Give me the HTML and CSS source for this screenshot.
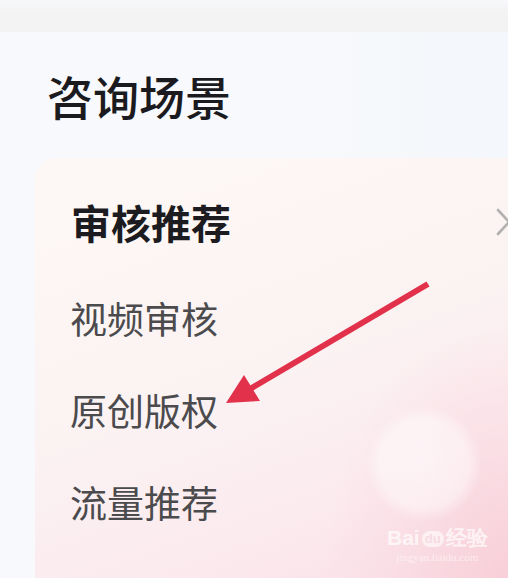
FILE: index.html
```html
<!DOCTYPE html>
<html lang="zh">
<head>
<meta charset="utf-8">
<link rel="stylesheet" href="styles.css">
</head>
<body>
<div class="page">
  <div class="topband"></div>
  <header class="header">
    <h1 class="title">咨询场景</h1>
  </header>
  <section class="card">
    <div class="row row-main">
      <span class="label-main">审核推荐</span>
      <svg class="chev" width="16" height="30" viewBox="0 0 16 30"><polyline points="3,3 14,15 3,27" fill="none" stroke="#b3b0b0" stroke-width="2.6" stroke-linecap="round" stroke-linejoin="round"/></svg>
    </div>
    <div class="row">视频审核</div>
    <div class="row">原创版权</div>
    <div class="row">流量推荐</div>
    <div class="watermark">
      <div class="wm-logo">Bai<span class="wm-du">du</span>经验</div>
      <div class="wm-url">jingyan.baidu.com</div>
    </div>
  </section>
  <svg class="arrow" width="508" height="578" viewBox="0 0 508 578">
    <line x1="428" y1="284" x2="250" y2="389" stroke="#e1314b" stroke-width="6" stroke-linecap="butt"/>
    <polygon points="226,403 244,375 260,401" fill="#e1314b"/>
  </svg>
</div>
</body>
</html>
```

FILE: styles.css
```css
html, body {
  margin: 0;
  padding: 0;
}
body {
  width: 508px;
  height: 578px;
  overflow: hidden;
  background: #f8f9fc;
  font-family: "Noto Sans CJK SC", "Noto Sans", sans-serif;
}
.page {
  position: relative;
  width: 508px;
  height: 578px;
  overflow: hidden;
  display: flex;
  flex-direction: column;
}
.topband {
  height: 32px;
  flex: none;
  background: linear-gradient(180deg, #f7f8fa 0%, #f3f3f4 35%, #f4f3f3 100%);
}
.header {
  flex: none;
  padding: 33px 0 33px 47px;
  background: linear-gradient(90deg, #f8f9fc 0%, #f7f9fc 60%, #f4f7fb 100%);
}
.title {
  margin: 0;
  font-size: 46px;
  line-height: 60px;
  font-weight: 500;
  color: #1b1b1f;
}
.card {
  position: relative;
  flex: 1;
  margin-left: 35px;
  padding: 18px 0 0 35px;
  border-radius: 22px 0 0 0;
  background:
    radial-gradient(circle at 389px 306px, rgba(255,255,255,0.55) 0, rgba(255,255,255,0.45) 44px, rgba(255,255,255,0) 58px),
    radial-gradient(ellipse 180px 260px at 470px 420px, rgba(248,200,212,0.7) 0, rgba(249,210,220,0.35) 60%, rgba(249,220,226,0) 100%),
    linear-gradient(160deg, #fdf8f6 0%, #fcf5f4 30%, #fbf1f2 55%, #fbe9ed 80%, #f9dfe6 100%);
}
.row {
  display: flex;
  align-items: center;
  height: 92px;
  font-size: 37px;
  line-height: 92px;
  color: #4b4a4d;
}
.row-main {
  margin-bottom: 4px;
  justify-content: space-between;
}
.label-main {
  margin-left: 1px;
  font-size: 40px;
  font-weight: 700;
  color: #1c1b1f;
}
.chev {
  flex: none;
  margin-right: -3px;
}
.watermark {
  position: absolute;
  left: 352px;
  top: 368px;
  color: rgba(255,255,255,0.7);
  text-align: center;
}
.wm-logo {
  font-family: "Liberation Sans", sans-serif;
  font-size: 21px;
  font-weight: 700;
  line-height: 24px;
}
.wm-du {
  display: inline-block;
  font-size: 13px;
  padding: 0 3px;
  margin: 0 2px;
  border-radius: 8px;
  background: rgba(255,255,255,0.6);
  color: #f6dbe2;
  line-height: 16px;
  vertical-align: 2px;
}
.wm-url {
  font-family: "Liberation Serif", serif;
  font-size: 11px;
  line-height: 14px;
  color: rgba(255,255,255,0.55);
}
.arrow {
  position: absolute;
  left: 0;
  top: 0;
  pointer-events: none;
}
```
